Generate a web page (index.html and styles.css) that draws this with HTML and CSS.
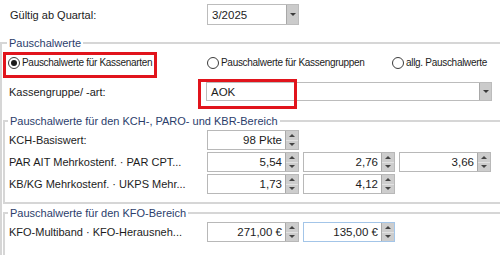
FILE: index.html
```html
<!DOCTYPE html>
<html lang="de">
<head>
    <meta charset="UTF-8">
    <meta name="viewport" content="width=device-width, initial-scale=1.0">
    <title>Pauschalwerte</title>
    <link rel="stylesheet" href="styles.css">
</head>
<body>

<div class="row top">
    <label class="lbl">Gültig ab Quartal:</label>
    <div class="combo quartal">
        <span class="val">3/2025</span>
        <span class="drop"></span>
    </div>
</div>

<fieldset class="grp outer">
    <legend>Pauschalwerte</legend>

    <div class="radios">
        <label class="radio marked"><span class="dot on"></span>Pauschalwerte für Kassenarten</label>
        <label class="radio"><span class="dot"></span>Pauschalwerte für Kassengruppen</label>
        <label class="radio"><span class="dot"></span>allg. Pauschalwerte</label>
    </div>

    <div class="row kasse">
        <label class="lbl">Kassengruppe/ -art:</label>
        <div class="combo wide marked-box">
            <span class="val">AOK</span>
            <span class="drop"></span>
        </div>
    </div>

    <fieldset class="grp inner kch">
        <legend>Pauschalwerte für den KCH-, PARO- und KBR-Bereich</legend>
        <div class="row line">
            <label class="lbl">KCH-Basiswert:</label>
            <div class="spin"><span class="num">98 Pkte</span><span class="btns"><span class="up"></span><span class="dn"></span></span></div>
        </div>
        <div class="row line">
            <label class="lbl">PAR AIT Mehrkostenf. &middot; PAR CPT...</label>
            <div class="spin"><span class="num">5,54</span><span class="btns"><span class="up"></span><span class="dn"></span></span></div>
            <div class="spin"><span class="num">2,76</span><span class="btns"><span class="up"></span><span class="dn"></span></span></div>
            <div class="spin"><span class="num">3,66</span><span class="btns"><span class="up"></span><span class="dn"></span></span></div>
        </div>
        <div class="row line">
            <label class="lbl">KB/KG Mehrkostenf. &middot; UKPS Mehr...</label>
            <div class="spin"><span class="num">1,73</span><span class="btns"><span class="up"></span><span class="dn"></span></span></div>
            <div class="spin"><span class="num">4,12</span><span class="btns"><span class="up"></span><span class="dn"></span></span></div>
        </div>
    </fieldset>

    <fieldset class="grp inner kfo">
        <legend>Pauschalwerte für den KFO-Bereich</legend>
        <div class="row line">
            <label class="lbl">KFO-Multiband &middot; KFO-Herausneh...</label>
            <div class="spin"><span class="num">271,00 €</span><span class="btns"><span class="up"></span><span class="dn"></span></span></div>
            <div class="spin focus"><span class="num">135,00 €</span><span class="btns"><span class="up"></span><span class="dn"></span></span></div>
        </div>
    </fieldset>
</fieldset>

</body>
</html>
```

FILE: styles.css
```css
* {
    box-sizing: border-box;
}
body {
    margin: 0;
    width: 500px;
    height: 257px;
    overflow: hidden;
    background-color: #fff;
    color: #1c1c1c;
    font-family: "Liberation Sans", Arial, sans-serif;
    font-size: 11px;
}
.row {
    display: flex;
    align-items: center;
}
.lbl {
    flex: none;
    width: 197px;
    white-space: nowrap;
}

/* Kopfzeile */
.top {
    height: 29px;
    padding: 4px 0 4px 10px;
}
.combo {
    position: relative;
    display: flex;
    height: 21px;
    border: 1px solid #bcbcbc;
    background-color: #fff;
}
.combo .val {
    flex: 1;
    display: flex;
    align-items: center;
    padding-left: 4px;
    font-size: 11.5px;
}
.combo .drop {
    width: 12px;
    background-color: #cbcbcb;
    border-left: 1px solid #a8a8a8;
    display: flex;
    align-items: center;
    justify-content: center;
}
.combo .drop::before {
    content: "";
    border-left: 3px solid transparent;
    border-right: 3px solid transparent;
    border-top: 3px solid #3a3a3a;
}
.quartal {
    width: 92px;
}
.wide {
    width: 286px;
    height: 19px;
}

/* Gruppen */
.grp {
    margin: 0;
    padding: 0;
    min-width: 0;
    border: 2px solid #d6d6d6;
    border-right: none;
}
.grp legend {
    padding: 0 2px;
    line-height: 14px;
    font-size: 11px;
    color: #2b3d6b;
}
.outer {
    margin-top: 7px;
    border-bottom: none;
}
.outer > legend {
    margin-left: 5px;
}

/* Radios */
.radios {
    display: grid;
    grid-template-columns: 204px 185px auto;
    height: 26px;
    margin-top: 2px;
    padding-left: 1px;
}
.radio {
    display: flex;
    align-items: flex-start;
    align-self: start;
    height: 26px;
    padding-top: 5px;
    font-size: 10px;
    letter-spacing: -0.3px;
    line-height: 12px;
    white-space: nowrap;
}
.radio.marked {
    width: 154px;
    border: 3px solid #e1141c;
    padding: 2px 0 0 2px;
}
.dot {
    position: relative;
    flex: none;
    width: 12px;
    height: 12px;
    margin-right: 2px;
    border: 1px solid #3c3c3c;
    border-radius: 50%;
    background-color: #fff;
}
.dot.on::after {
    content: "";
    position: absolute;
    left: 2px;
    top: 2px;
    width: 6px;
    height: 6px;
    border-radius: 50%;
    background-color: #1c1c1c;
}

.kasse {
    margin-top: 4px;
    height: 19px;
    padding-left: 7px;
}
.marked-box::after {
    content: "";
    position: absolute;
    left: -9px;
    top: -4px;
    width: 93px;
    height: 24px;
    border: 3px solid #e1141c;
}

/* Unterbereiche */
.inner {
    margin-left: 1px;
}
.inner > legend {
    margin-left: 3px;
}
.kch {
    margin-top: 13px;
    padding: 2px 0 6px 0;
}
.kfo {
    margin-top: 2px;
    padding: 2px 0 11px 0;
    border-bottom: none;
}
.line {
    height: 20px;
    gap: 4px;
    padding-left: 4px;
    margin-bottom: 2px;
}
.line .lbl {
    width: 198px;
    margin-right: -4px;
}

/* Zahlenfelder */
.spin {
    display: flex;
    width: 92px;
    height: 20px;
    border: 1px solid #b8b8b8;
    background-color: #fff;
}
.spin.focus {
    border-color: #a3c5e8;
}
.spin .num {
    flex: 1;
    text-align: right;
    padding-right: 3px;
    line-height: 18px;
    font-size: 11.5px;
    white-space: nowrap;
}
.btns {
    width: 13px;
    display: flex;
    flex-direction: column;
    background-color: #cdcdcd;
    border-left: 1px solid #a9a9a9;
}
.btns span {
    flex: 1;
    display: flex;
    align-items: center;
    justify-content: center;
}
.btns .up {
    border-bottom: 1px solid #e2e2e2;
}
.btns .up::before {
    content: "";
    border-left: 3px solid transparent;
    border-right: 3px solid transparent;
    border-bottom: 3px solid #444;
}
.btns .dn::before {
    content: "";
    border-left: 3px solid transparent;
    border-right: 3px solid transparent;
    border-top: 3px solid #444;
}
```
